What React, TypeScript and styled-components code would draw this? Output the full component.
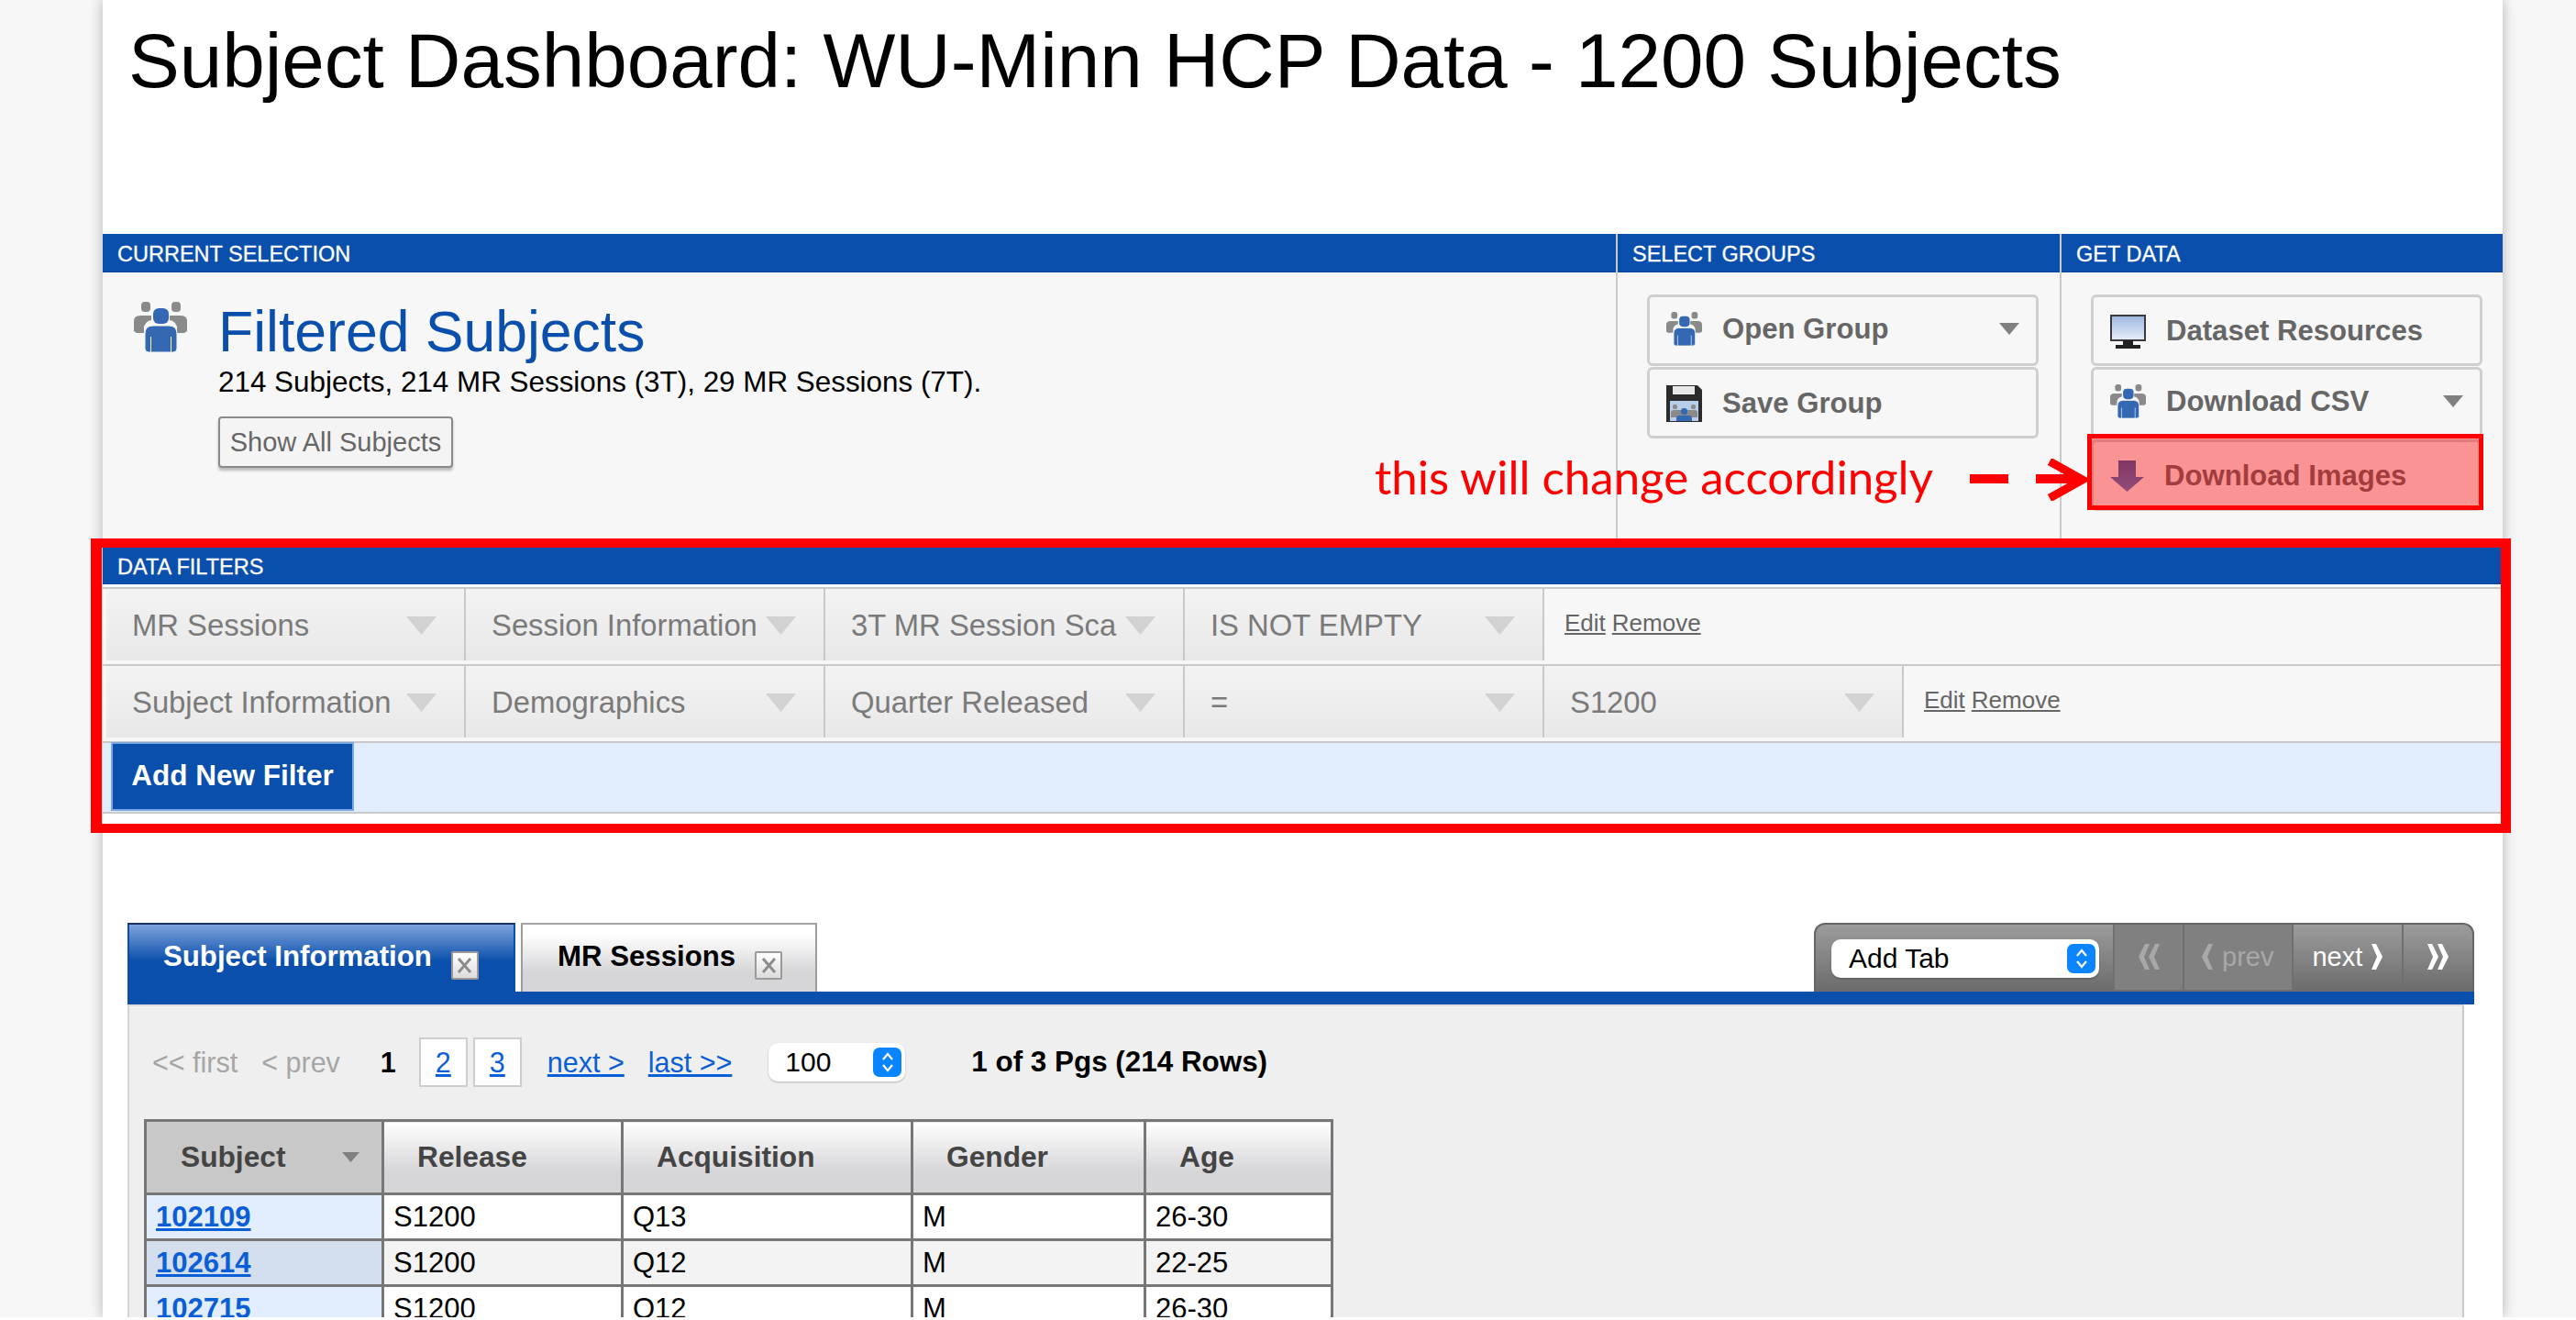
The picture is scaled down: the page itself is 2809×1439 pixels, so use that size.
import styled, { createGlobalStyle } from 'styled-components'

const GlobalStyle = createGlobalStyle`
  html, body {
    margin: 0;
    padding: 0;
    background: #fff;
    overflow: hidden;
  }
  * {
    box-sizing: border-box;
  }
`

const Page = styled.div`
  position: relative;
  width: 2809px;
  height: 1436px;
  overflow: hidden;
  background: #f7f7f7;
  font-family: "Liberation Sans", Arial, sans-serif;
`

const Sheet = styled.div`
  width: 2617px;
  height: 1436px;
  margin-left: 112px;
  background: #fff;
  box-shadow: 0 0 14px rgba(0, 0, 0, 0.28);
`

const TitleBlock = styled.div`
  height: 255px;
  padding: 16px 0 0 28px;
`

const Title = styled.h1`
  margin: 0;
  font-size: 83.6px;
  line-height: 100px;
  font-weight: 400;
  color: #000;
`

const SelectionGrid = styled.div`
  display: grid;
  grid-template-columns: 1650px 484px 483px;
  height: 342px;
`

const Column = styled.section<{ $divided?: boolean }>`
  display: flex;
  flex-direction: column;
  background: #f7f7f7;
  border-left: ${p => (p.$divided ? '2px solid #c9c9c9' : 'none')};
`

const BarTitle = styled.div<{ $height?: number }>`
  height: ${p => p.$height ?? 42}px;
  flex: none;
  padding: 2px 0 0 16px;
  background: #0a4fab;
  border-bottom: 1px solid #0a429a;
  color: #fff;
  font-size: 23.5px;
  line-height: ${p => (p.$height ?? 42) - 2}px;
  -webkit-text-stroke: 0.3px #fff;
  white-space: nowrap;
`

const SelectionBody = styled.div`
  display: flex;
  padding: 32px 0 0 34px;
`

const SelectionText = styled.div`
  margin: -3px 0 0 34px;
`

const SelectionName = styled.div`
  font-size: 62.5px;
  line-height: 70px;
  color: #0a4fab;
`

const SelectionCount = styled.div`
  margin-top: 3px;
  font-size: 31.4px;
  line-height: 36px;
  color: #000;
`

const ShowAll = styled.button`
  display: block;
  width: 256px;
  height: 56px;
  margin-top: 19px;
  padding: 0;
  border: 2px solid #8a8a8a;
  border-radius: 4px;
  background: #f4f4f4;
  box-shadow: 0 3px 3px rgba(0, 0, 0, 0.25);
  color: #666;
  font-family: inherit;
  font-size: 29px;
`

const ButtonStack = styled.div`
  display: flex;
  flex-direction: column;
  gap: 1px;
  padding: 24px 0 0 32px;
`

const ActionButton = styled.div<{ $lift?: boolean }>`
  display: flex;
  align-items: center;
  width: 427px;
  height: 78px;
  padding: 2px 18px ${p => (p.$lift ? 5 : 0)}px;
  border: 3px solid #cfcfcf;
  border-radius: 6px;
  background: #f7f7f7;
  color: #666;
  font-size: 31.1px;
  font-weight: 700;
`

const ActionLabel = styled.span`
  flex: 1;
  margin-left: 22px;
`

const Filters = styled.section`
  background: #fff;
`

const FilterRows = styled.div`
  padding-top: 3px;
`

const FilterRow = styled.div`
  display: flex;
  height: 84px;
  padding: 0 0 4px 4px;
  background: #f7f7f7;
  border-top: 2px solid #c9c9c9;
`

const FilterCell = styled.div`
  display: flex;
  align-items: center;
  justify-content: space-between;
  width: 392px;
  padding: 2px 30px 0 28px;
  background: linear-gradient(#f3f3f3, #e8e8e8);
  border-right: 2px solid #c9c9c9;
  color: #7a7a7a;
  font-size: 32.8px;
  white-space: nowrap;
`

const FilterLinks = styled.div`
  display: flex;
  gap: 7px;
  margin: -4px 0 0 22px;
  align-self: center;
  font-size: 26px;
`

const GreyLink = styled.a`
  color: #666;
  text-decoration: underline;
`

const AddBand = styled.div`
  height: 79px;
  padding-left: 9px;
  background: #e2eefd;
  border-top: 2px solid #c9c9c9;
  border-bottom: 2px solid #c9c9c9;
`

const AddButton = styled.button`
  display: block;
  width: 265px;
  height: 75px;
  padding: 0 0 3px;
  margin-top: -1px;
  background: #0a4fab;
  border: 2px solid #7ca6e4;
  color: #fff;
  font-family: inherit;
  font-size: 31.5px;
  font-weight: 700;
`

const TabArea = styled.section`
  margin: 119px 31px 0 27px;
`

const TabBar = styled.div`
  display: flex;
  justify-content: space-between;
  height: 75px;
`

const Tabs = styled.div`
  display: flex;
  gap: 6px;
`

const Tab = styled.div<{ $active?: boolean; $width: number }>`
  display: flex;
  align-items: flex-start;
  width: ${p => p.$width}px;
  padding: 17px 0 0 ${p => (p.$active ? 37 : 38)}px;
  border: 2px solid ${p => (p.$active ? '#0a4fab' : '#9c9c9c')};
  border-bottom: none;
  border-top-color: ${p => (p.$active ? '#1c2f60' : '#a4a4a4')};
  background: ${p =>
    p.$active ? 'linear-gradient(#7fa3dc, #0a4fab 55%)' : 'linear-gradient(#fff 15%, #d6d6d9 70%)'};
  color: ${p => (p.$active ? '#fff' : '#000')};
  font-size: 31.2px;
  line-height: 36px;
  font-weight: 700;
  white-space: nowrap;
`

const TabClose = styled.span`
  display: flex;
  align-items: center;
  justify-content: center;
  width: 30px;
  height: 31px;
  margin: 12px 0 0 21px;
  border: 2px solid #9a9a9a;
  border-radius: 2px;
  background: linear-gradient(#fff, #dcdcdc);
`

const Toolbar = styled.div`
  display: flex;
  width: 720px;
  border: 2px solid #666;
  border-bottom: none;
  border-radius: 12px 12px 0 0;
  background: linear-gradient(#9c9c9c, #6b6b6b);
  overflow: hidden;
`

const AddTabWrap = styled.div`
  display: flex;
  width: 325px;
  padding: 16px 0 0 17px;
`

const NativeSelect = styled.div<{ $width: number; $pad: number; $left?: number }>`
  display: flex;
  align-items: center;
  justify-content: space-between;
  width: ${p => p.$width}px;
  height: 42px;
  margin-left: ${p => p.$left ?? 0}px;
  padding: 0 4px 0 ${p => p.$pad}px;
  background: #fff;
  border-radius: 10px;
  box-shadow: 0 1px 2px rgba(0, 0, 0, 0.25);
  color: #000;
  font-size: 30px;
  font-weight: 400;
`

const Stepper = styled.span`
  display: flex;
  align-items: center;
  justify-content: center;
  width: 31px;
  height: 32px;
  background: #0a84ff;
  border-radius: 7px;
`

const PagerButton = styled.div<{ $disabled?: boolean; $width: number }>`
  display: flex;
  align-items: center;
  justify-content: center;
  gap: 10px;
  width: ${p => p.$width}px;
  padding-bottom: ${p => (p.$disabled ? 1 : 3)}px;
  margin-bottom: ${p => (p.$disabled ? 2 : 0)}px;
  border-left: 2px solid #6f6f6f;
  background: ${p => (p.$disabled ? '#808080' : 'transparent')};
  color: ${p => (p.$disabled ? '#a8a8a8' : '#fff')};
  font-size: 29px;
`

const BlueRule = styled.div`
  height: 14px;
  background: #0a4fab;
`

const Panel = styled.div`
  width: 2548px;
  min-height: 400px;
  padding: 34px 0 0 16px;
  background: #efefef;
  border-right: 2px solid #c9c9c9;
  border-left: 2px solid #d4d4d4;
  border-top: 2px solid #dcdcdc;
`

const Pager = styled.div`
  display: flex;
  align-items: center;
  height: 54px;
  padding-left: 9px;
  font-size: 30.5px;
`

const PagerText = styled.span<{ $left: number; $muted?: boolean }>`
  margin-left: ${p => p.$left}px;
  color: ${p => (p.$muted ? '#a6a6a6' : '#000')};
  font-weight: ${p => (p.$muted ? 400 : 700)};
  white-space: nowrap;
`

const PagerLink = styled.a<{ $left: number }>`
  margin-left: ${p => p.$left}px;
  color: #0a5ed6;
  text-decoration: underline;
  white-space: nowrap;
`

const PageBox = styled.a<{ $left: number }>`
  display: flex;
  align-items: center;
  justify-content: center;
  width: 53px;
  height: 54px;
  margin-left: ${p => p.$left}px;
  background: #fff;
  border: 2px solid #cdcdcd;
  color: #0a5ed6;
  text-decoration: underline;
`

const PagerSummary = styled.span`
  margin-left: 72px;
  color: #000;
  font-size: 31.4px;
  font-weight: 700;
  white-space: nowrap;
`

const DataTable = styled.table`
  width: 1294px;
  margin-top: 35px;
  table-layout: fixed;
  border-collapse: collapse;
  border: 3px solid #777;
`

const HeadCell = styled.th<{ $sorted?: boolean; $width: number }>`
  width: ${p => p.$width}px;
  height: 80px;
  padding: 0 0 0 ${p => (p.$sorted ? 37 : 36)}px;
  border: 3px solid #777;
  background: ${p => (p.$sorted ? '#c8c8c8' : 'linear-gradient(#fff, #d6d6d9 70%)')};
  color: #444;
  font-size: 31.7px;
  font-weight: 700;
  text-align: left;
`

const HeadInner = styled.div`
  display: flex;
  align-items: center;
  justify-content: space-between;
  padding-right: 24px;
`

const Row = styled.tr<{ $alt?: boolean }>`
  background: ${p => (p.$alt ? '#f3f3f3' : '#fff')};
`

const Cell = styled.td`
  height: 50px;
  padding: 0 0 0 10px;
  border: 3px solid #777;
  color: #000;
  font-size: 31px;
`

const SubjectCell = styled.td<{ $alt?: boolean }>`
  height: 50px;
  padding: 0 0 0 10px;
  border: 3px solid #777;
  background: ${p => (p.$alt ? '#d3dfef' : '#e2eefd')};
  font-size: 31px;
  font-weight: 700;
`

const SubjectLink = styled.a`
  color: #0a5ed6;
  text-decoration: underline;
`

const FilterOutline = styled.div`
  position: absolute;
  left: 99px;
  top: 587px;
  width: 2639px;
  height: 321px;
  border: solid #f00;
  border-width: 10px 11px 10px 12px;
  pointer-events: none;
`

const ImageHighlight = styled.div`
  position: absolute;
  left: 2276px;
  top: 473px;
  width: 432px;
  height: 83px;
  border: 5px solid #f00;
  background: rgba(255, 0, 0, 0.4);
  pointer-events: none;
`

const Callout = styled.div`
  position: absolute;
  left: 1499px;
  top: 486px;
  color: #f00;
  font-family: Lato, "Open Sans", sans-serif;
  font-size: 51px;
  line-height: 68px;
  white-space: nowrap;
`

const CalloutArrow = styled.svg`
  position: absolute;
  left: 2148px;
  top: 500px;
`

const IconBox = styled.span`
  display: flex;
  flex: none;
`

const CaretIcon = styled.svg`
  flex: none;
`

const FILTERS = [
  { cells: ['MR Sessions', 'Session Information', '3T MR Session Sca', 'IS NOT EMPTY'] },
  { cells: ['Subject Information', 'Demographics', 'Quarter Released', '=', 'S1200'] },
]

const ROWS = [
  { id: '102109', release: 'S1200', acq: 'Q13', gender: 'M', age: '26-30' },
  { id: '102614', release: 'S1200', acq: 'Q12', gender: 'M', age: '22-25' },
  { id: '102715', release: 'S1200', acq: 'Q12', gender: 'M', age: '26-30' },
]

const People = ({ size }: { size: number }) => (
  <svg width={size} height={size * 56 / 58} viewBox="0 0 58 56">
    <g fill="#8a8a8a">
      <rect x="8" y="0" width="10" height="11" rx="4" />
      <rect x="41" y="0" width="10" height="11" rx="4" />
      <path d="M0 32V21q0-6 7-6h12v5q-6 1-8 7v7H3z" />
      <path d="M58 32V21q0-6-7-6H39v5q6 1 8 7v7h8z" />
    </g>
    <rect x="21" y="7" width="17" height="17" rx="6" fill="#3568b3" />
    <path d="M12 51V35q0-9 9-9h17q9 0 9 9v16q0 4-4 4H16q-4 0-4-4z" fill="#3568b3" stroke="#f7f7f7" strokeWidth="1" />
    <path d="M18.500 38v17M40.500 38v17" stroke="#f7f7f7" strokeWidth="1" />
  </svg>
)

const Floppy = () => (
  <svg width="39" height="40" viewBox="0 0 39 40">
    <path d="M0 0h34l5 5v35H0z" fill="#2b2b2b" />
    <rect x="7" y="1" width="24" height="9" fill="#e8e8e8" />
    <rect x="4" y="17" width="31" height="22" fill="#b9cfe9" />
    <rect x="7" y="21" width="5" height="5" rx="2" fill="#8a8a8a" />
    <rect x="27" y="21" width="5" height="5" rx="2" fill="#8a8a8a" />
    <path d="M5 35v-5q0-3 3-3h23q3 0 3 3v5z" fill="#8a8a8a" />
    <rect x="16" y="25" width="7" height="7" rx="3" fill="#3568b3" />
    <path d="M11 39v-3q0-3 3-3h11q3 0 3 3v3z" fill="#3568b3" />
  </svg>
)

const Monitor = () => (
  <svg width="39" height="37" viewBox="0 0 39 37">
    <defs>
      <linearGradient id="screen" x1="0" y1="0" x2="0" y2="1">
        <stop offset="0" stopColor="#9db7e2" />
        <stop offset="1" stopColor="#e6edf8" />
      </linearGradient>
    </defs>
    <rect x="1" y="1" width="37" height="27" fill="url(#screen)" stroke="#3a3a3a" strokeWidth="2" />
    <rect x="14" y="28" width="11" height="5" fill="#222" />
    <rect x="6" y="33" width="27" height="4" fill="#222" />
  </svg>
)

const DownArrow = () => (
  <svg width="37" height="34" viewBox="0 0 37 34">
    <defs>
      <linearGradient id="down" x1="0" y1="0" x2="0" y2="1">
        <stop offset="0" stopColor="#2f5aa6" />
        <stop offset="1" stopColor="#4a80c8" />
      </linearGradient>
    </defs>
    <path d="M9 0h19v18h9L18.500 34 0 18h9z" fill="url(#down)" />
  </svg>
)

const Caret = ({ w, h, color }: { w: number; h: number; color: string }) => (
  <CaretIcon width={w} height={h} viewBox="0 0 10 10" preserveAspectRatio="none">
    <path d="M0 0h10L5 10z" fill={color} />
  </CaretIcon>
)

const CloseX = () => (
  <svg width="17" height="17" viewBox="0 0 17 17">
    <path d="M2 1l13 15M15 1L2 16" stroke="#8c8c8c" strokeWidth="3" fill="none" />
  </svg>
)

const StepperArrows = () => (
  <svg width="14" height="24" viewBox="0 0 14 24">
    <path d="M2 9l5-6 5 6M2 15l5 6 5-6" stroke="#fff" strokeWidth="2.200" fill="none" />
  </svg>
)

const Chevron = ({ dir, double, color }: { dir: 'l' | 'r'; double?: boolean; color: string }) => {
  const w = double ? 24 : 12
  return (
    <CaretIcon width={w} height="28" viewBox={`0 0 ${w} 28`}>
      <g transform={dir === 'l' ? `translate(${w}) scale(-1 1)` : undefined}>
        <path d="M0 0h5l7 14-7 14H0l6-14z" fill={color} />
        {double && <path d="M11 0h5l7 14-7 14h-5l6-14z" fill={color} />}
      </g>
    </CaretIcon>
  )
}

const App = () => {
  return (
    <>
      <GlobalStyle />
      <Page>
        <Sheet>
          <TitleBlock>
            <Title>Subject Dashboard: WU-Minn HCP Data - 1200 Subjects</Title>
          </TitleBlock>

          <SelectionGrid>
            <Column>
              <BarTitle>CURRENT SELECTION</BarTitle>
              <SelectionBody>
                <IconBox><People size={58} /></IconBox>
                <SelectionText>
                  <SelectionName>Filtered Subjects</SelectionName>
                  <SelectionCount>214 Subjects, 214 MR Sessions (3T), 29 MR Sessions (7T).</SelectionCount>
                  <ShowAll>Show All Subjects</ShowAll>
                </SelectionText>
              </SelectionBody>
            </Column>
            <Column $divided>
              <BarTitle>SELECT GROUPS</BarTitle>
              <ButtonStack>
                <ActionButton $lift>
                  <IconBox><People size={39} /></IconBox>
                  <ActionLabel>Open Group</ActionLabel>
                  <Caret w={22} h={13} color="#808080" />
                </ActionButton>
                <ActionButton>
                  <IconBox><Floppy /></IconBox>
                  <ActionLabel>Save Group</ActionLabel>
                </ActionButton>
              </ButtonStack>
            </Column>
            <Column $divided>
              <BarTitle>GET DATA</BarTitle>
              <ButtonStack>
                <ActionButton>
                  <IconBox><Monitor /></IconBox>
                  <ActionLabel>Dataset Resources</ActionLabel>
                </ActionButton>
                <ActionButton $lift>
                  <IconBox><People size={39} /></IconBox>
                  <ActionLabel>Download CSV</ActionLabel>
                  <Caret w={22} h={13} color="#808080" />
                </ActionButton>
                <ActionButton>
                  <IconBox><DownArrow /></IconBox>
                  <ActionLabel>Download Images</ActionLabel>
                </ActionButton>
              </ButtonStack>
            </Column>
          </SelectionGrid>

          <Filters>
            <BarTitle $height={40}>DATA FILTERS</BarTitle>
            <FilterRows>
              {FILTERS.map(f => (
                <FilterRow key={f.cells[0]}>
                  {f.cells.map(c => (
                    <FilterCell key={c}>
                      {c}
                      <Caret w={33} h={20} color="#d2d2d2" />
                    </FilterCell>
                  ))}
                  <FilterLinks>
                    <GreyLink>Edit</GreyLink>
                    <GreyLink>Remove</GreyLink>
                  </FilterLinks>
                </FilterRow>
              ))}
              <AddBand>
                <AddButton>Add New Filter</AddButton>
              </AddBand>
            </FilterRows>
          </Filters>

          <TabArea>
            <TabBar>
              <Tabs>
                <Tab $active $width={423}>
                  Subject Information
                  <TabClose><CloseX /></TabClose>
                </Tab>
                <Tab $width={323}>
                  MR Sessions
                  <TabClose><CloseX /></TabClose>
                </Tab>
              </Tabs>
              <Toolbar>
                <AddTabWrap>
                  <NativeSelect $width={292} $pad={19}>
                    Add Tab
                    <Stepper><StepperArrows /></Stepper>
                  </NativeSelect>
                </AddTabWrap>
                <PagerButton $disabled $width={76}><Chevron dir="l" double color="#a8a8a8" /></PagerButton>
                <PagerButton $disabled $width={119}><Chevron dir="l" color="#a8a8a8" />prev</PagerButton>
                <PagerButton $width={121}>next<Chevron dir="r" color="#fff" /></PagerButton>
                <PagerButton $width={77}><Chevron dir="r" double color="#fff" /></PagerButton>
              </Toolbar>
            </TabBar>
            <BlueRule />
            <Panel>
              <Pager>
                <PagerText $left={0} $muted>&lt;&lt; first</PagerText>
                <PagerText $left={26} $muted>&lt; prev</PagerText>
                <PagerText $left={44}>1</PagerText>
                <PageBox $left={25}>2</PageBox>
                <PageBox $left={6}>3</PageBox>
                <PagerLink $left={28}>next &gt;</PagerLink>
                <PagerLink $left={26}>last &gt;&gt;</PagerLink>
                <NativeSelect $width={149} $pad={18} $left={40}>
                  100
                  <Stepper><StepperArrows /></Stepper>
                </NativeSelect>
                <PagerSummary>1 of 3 Pgs (214 Rows)</PagerSummary>
              </Pager>
              <DataTable>
                <thead>
                  <tr>
                    <HeadCell $sorted $width={259}>
                      <HeadInner>Subject<Caret w={19} h={11} color="#808080" /></HeadInner>
                    </HeadCell>
                    <HeadCell $width={261}>Release</HeadCell>
                    <HeadCell $width={316}>Acquisition</HeadCell>
                    <HeadCell $width={254}>Gender</HeadCell>
                    <HeadCell $width={204}>Age</HeadCell>
                  </tr>
                </thead>
                <tbody>
                  {ROWS.map((r, i) => (
                    <Row key={r.id} $alt={i % 2 === 1}>
                      <SubjectCell $alt={i % 2 === 1}><SubjectLink>{r.id}</SubjectLink></SubjectCell>
                      <Cell>{r.release}</Cell>
                      <Cell>{r.acq}</Cell>
                      <Cell>{r.gender}</Cell>
                      <Cell>{r.age}</Cell>
                    </Row>
                  ))}
                </tbody>
              </DataTable>
            </Panel>
          </TabArea>
        </Sheet>

        <ImageHighlight />
        <Callout>this will change accordingly</Callout>
        <CalloutArrow width="128" height="46" viewBox="0 0 128 46">
          <rect x="0" y="17" width="42" height="10" fill="#f00" />
          <rect x="72" y="17" width="44" height="10" fill="#f00" />
          <path d="M87 3l36 20-36 20" fill="none" stroke="#f00" strokeWidth="9" />
        </CalloutArrow>
        <FilterOutline />
      </Page>
    </>
  )
}

export default App
